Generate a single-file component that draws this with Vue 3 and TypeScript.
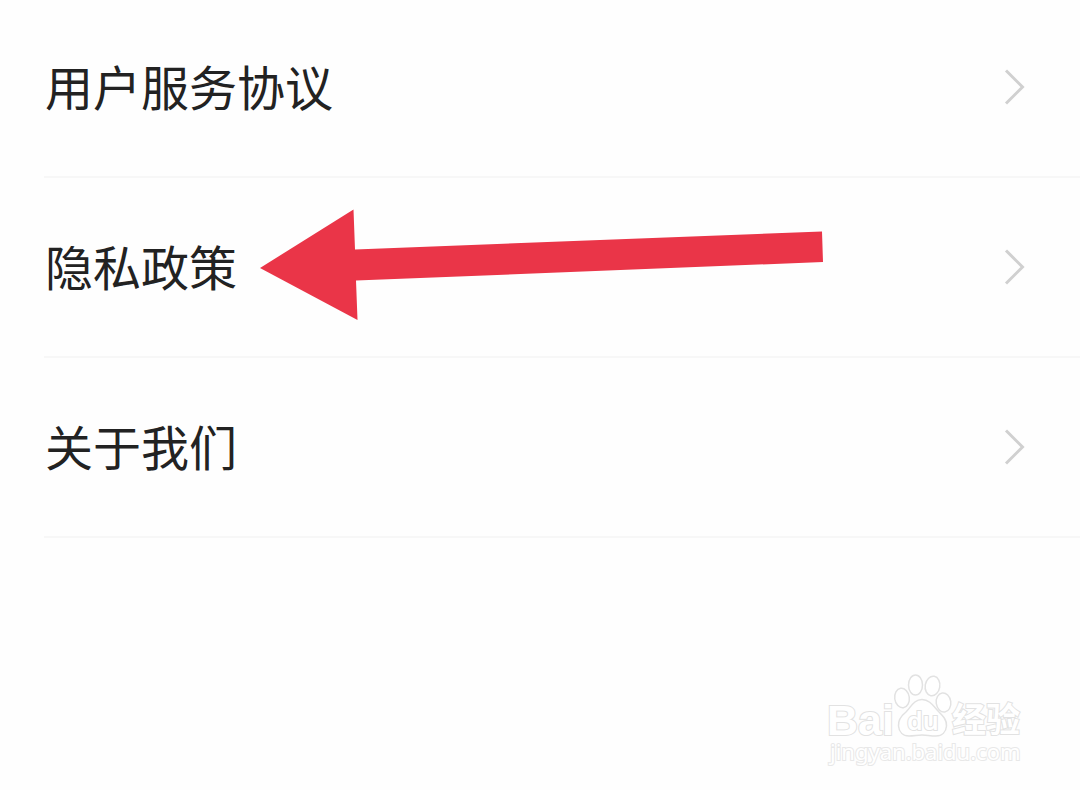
<script setup lang="ts">
interface Entry {
  label: string
  href: string
  marked?: boolean
}

const entries: Entry[] = [
  { label: '用户服务协议', href: '#terms' },
  { label: '隐私政策', href: '#privacy', marked: true },
  { label: '关于我们', href: '#about' },
]
</script>

<template>
  <div class="page">
    <nav class="list">
      <a v-for="entry in entries" :key="entry.href" class="row" :href="entry.href">
        <span class="label">{{ entry.label }}</span>
        <svg class="chevron" width="22" height="38" viewBox="0 0 22 38" aria-hidden="true">
          <path d="M2 2.5 L18.500 19 L2 35.5" />
        </svg>
        <svg v-if="entry.marked" class="arrow" width="564" height="112" viewBox="0 0 564 112" aria-hidden="true">
          <path d="M0 59 L93.5 0.5 L95 40.5 L562 22.500 L563 53 L96 71.500 L97.5 111 Z" />
        </svg>
      </a>
    </nav>
    <footer class="footer">
      <svg class="mark" width="210" height="110" viewBox="0 0 210 110" role="img" aria-label="Baidu 经验">
        <text class="latin" x="7" y="70">Bai</text>
        <ellipse cx="82" cy="33" rx="7.3" ry="9.8" transform="rotate(-8 82 33)" />
        <ellipse cx="95.5" cy="20" rx="7" ry="10" />
        <ellipse cx="112.5" cy="21" rx="7.3" ry="9.8" transform="rotate(10 112.5 21)" />
        <ellipse cx="123.5" cy="37.5" rx="7.3" ry="9.6" transform="rotate(-8 123.5 37.5)" />
        <path d="M102 34.5 C94 34.5 91 42 86 47 C81 51 78 55 78.5 61 C79 67 83 71 89 71 C94 71 97 70 102 70 C107 70 110 71 116 71 C122 71 126 67 126.5 61 C127 55 123 51 119 47 C114 42 110 34.5 102 34.5 Z" />
        <text class="du" x="87" y="65">du</text>
        <text class="han" x="132" y="67">经验</text>
        <text class="url" x="10" y="95">jingyan.baidu.com</text>
      </svg>
    </footer>
  </div>
</template>

<style>
body {
  margin: 0;
  background: #fefefe;
}
</style>

<style scoped>
.page {
  display: flex;
  flex-direction: column;
  min-height: 100vh;
  overflow: hidden;
  background: #fefefe;
  font-family: "Noto Sans CJK SC", sans-serif;
}

.list {
  display: flex;
  flex-direction: column;
  margin-top: -2px;
  padding-left: 44px;
}

.row {
  position: relative;
  display: flex;
  align-items: center;
  justify-content: space-between;
  box-sizing: border-box;
  min-height: 180px;
  padding: 0 54px 0 1px;
  border-bottom: 2px solid #f7f7f7;
  color: #222;
  text-decoration: none;
}

.label {
  padding-bottom: 4px;
  font-size: 48px;
  line-height: 72px;
}

.chevron {
  fill: none;
  stroke: #d0d0d0;
  stroke-width: 3;
}

.arrow {
  position: absolute;
  left: 216px;
  top: 31px;
  fill: #ea3548;
}

.footer {
  display: flex;
  justify-content: flex-end;
  margin-top: auto;
  padding: 0 50px 15px 0;
}

.mark {
  fill: #fff;
  stroke: #e2e2e2;
  stroke-width: 1.5;
}

.mark text {
  font-family: "Liberation Sans", sans-serif;
  paint-order: stroke;
  stroke-width: 2;
}

.mark .latin {
  font-size: 43px;
  font-weight: 700;
}

.mark .du {
  font-family: "Noto Sans", sans-serif;
  font-size: 25px;
  font-weight: 600;
}

.mark .han {
  font-family: "Noto Sans CJK SC", sans-serif;
  font-size: 34px;
  font-weight: 700;
}

.mark .url {
  font-family: "Noto Sans", sans-serif;
  font-size: 22px;
  stroke: #e8e8e8;
}
</style>
